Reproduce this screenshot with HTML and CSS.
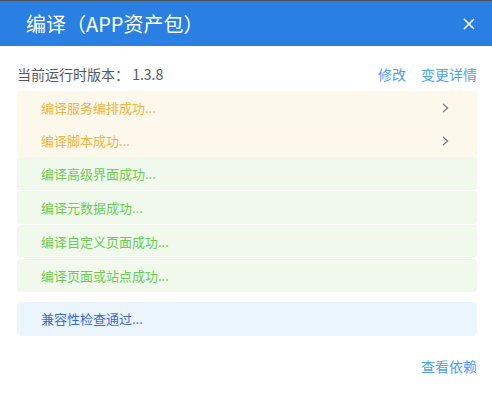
FILE: index.html
```html
<!DOCTYPE html>
<html lang="zh-CN">
<head>
<meta charset="utf-8">
<title>编译（APP资产包）</title>
<link rel="stylesheet" href="styles.css">
</head>
<body>
<div class="dialog">
  <div class="header">
    <span class="title">编译（APP资产包）</span>
    <span class="close">
      <svg width="12" height="12" viewBox="0 0 12 12"><path d="M1 1L11 11M11 1L1 11" stroke="#fff" stroke-width="1.6" fill="none"/></svg>
    </span>
  </div>
  <div class="body">
    <div class="version-row">
      <span class="version">当前运行时版本： 1.3.8</span>
      <span class="links"><a class="link">修改</a><a class="link">变更详情</a></span>
    </div>
    <div class="warn-group">
      <div class="item warn"><span>编译服务编排成功...</span><svg class="chev" width="7" height="10" viewBox="0 0 7 10"><path d="M1 0.8L5.6 5L1 9.2" stroke="#5f6b80" stroke-width="1.1" fill="none"/></svg></div>
      <div class="item warn"><span>编译脚本成功...</span><svg class="chev" width="7" height="10" viewBox="0 0 7 10"><path d="M1 0.8L5.6 5L1 9.2" stroke="#5f6b80" stroke-width="1.1" fill="none"/></svg></div>
    </div>
    <div class="item ok">编译高级界面成功...</div>
    <div class="item ok">编译元数据成功...</div>
    <div class="item ok">编译自定义页面成功...</div>
    <div class="item ok">编译页面或站点成功...</div>
    <div class="item info">兼容性检查通过...</div>
    <div class="footer"><a class="link">查看依赖</a></div>
  </div>
</div>
</body>
</html>
```
FILE: styles.css
```css
html, body {
  margin: 0;
  padding: 0;
  background: #fff;
}
body {
  font-family: "Noto Sans CJK SC", "Noto Sans", sans-serif;
  width: 492px;
  height: 406px;
  overflow: hidden;
}
.dialog {
  border-top: 1px solid #4a4d52;
}
.header {
  height: 45px;
  background: #2980e2;
  display: flex;
  align-items: center;
  justify-content: space-between;
  padding: 0 17px 0 26px;
}
.title {
  color: #fff;
  font-size: 20px;
  line-height: 26px;
  margin-top: 1px;
}
.close {
  display: flex;
  width: 12px;
  height: 12px;
}
.body {
  padding: 18px 15px 0 17px;
}
.version-row {
  display: flex;
  justify-content: space-between;
  align-items: center;
  height: 20px;
  font-size: 14px;
  line-height: 20px;
  margin-bottom: 7px;
}
.version {
  color: #555a60;
}
.links {
  display: flex;
  gap: 15px;
}
.link {
  color: #4aa3f0;
  cursor: pointer;
}
.warn-group {
  background: #fdf8ec;
  border-radius: 2px;
}
.item {
  height: 33px;
  display: flex;
  align-items: center;
  justify-content: space-between;
  padding: 0 28px 0 24px;
  font-size: 13px;
  line-height: 18px;
  box-sizing: border-box;
}
.warn {
  color: #f2b443;
}
.ok {
  background: #f0f9eb;
  color: #6ccd55;
  border-radius: 4px;
  margin-bottom: 1px;
}
.info {
  background: #ebf5fe;
  color: #3f68d8;
  border-radius: 4px;
  height: 34px;
  margin-top: 10px;
}
.chev {
  display: block;
}
.footer {
  display: flex;
  justify-content: flex-end;
  margin-top: 20px;
  font-size: 14px;
  line-height: 20px;
}
```
